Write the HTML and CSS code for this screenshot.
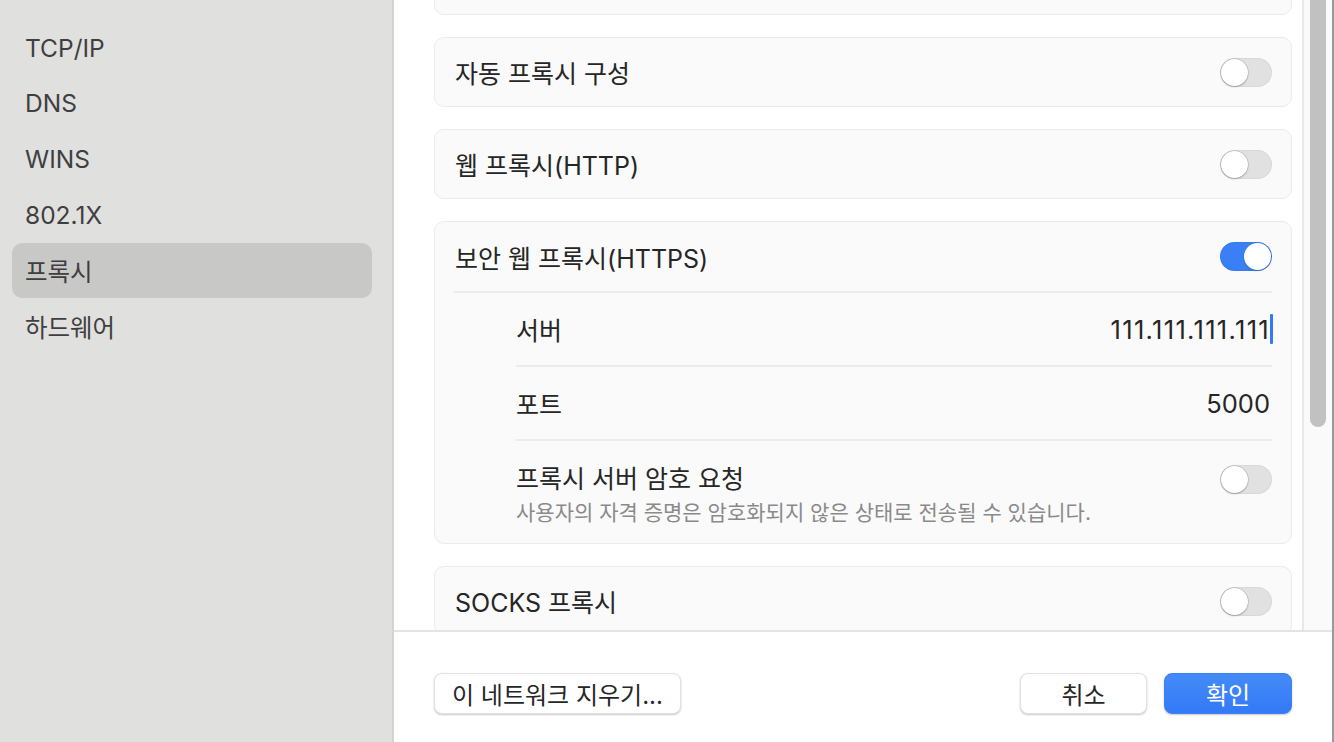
FILE: index.html
```html
<!DOCTYPE html>
<html lang="ko">
<head>
<meta charset="utf-8">
<title>프록시</title>
<link rel="stylesheet" href="styles.css">
</head>
<body>
<div class="window">
  <aside class="sidebar">
    <div class="nav-item">TCP/IP</div>
    <div class="nav-item">DNS</div>
    <div class="nav-item">WINS</div>
    <div class="nav-item">802.1X</div>
    <div class="nav-item selected">프록시</div>
    <div class="nav-item">하드웨어</div>
  </aside>
  <main class="main">
    <div class="scroll-area">
      <div class="content">
        <div class="card card-clipped"></div>
        <div class="card">
          <div class="row">
            <span class="label">자동 프록시 구성</span>
            <span class="toggle"></span>
          </div>
        </div>
        <div class="card">
          <div class="row">
            <span class="label">웹 프록시(HTTP)</span>
            <span class="toggle"></span>
          </div>
        </div>
        <div class="card">
          <div class="row header-row">
            <span class="label">보안 웹 프록시(HTTPS)</span>
            <span class="toggle on"></span>
          </div>
          <div class="sub">
            <div class="sub-row">
              <span class="label">서버</span>
              <span class="value ip">111.111.111.111<span class="caret"></span></span>
            </div>
            <div class="sub-row">
              <span class="label">포트</span>
              <span class="value">5000</span>
            </div>
            <div class="sub-row last">
              <div class="text-stack">
                <span class="label">프록시 서버 암호 요청</span>
                <span class="hint">사용자의 자격 증명은 암호화되지 않은 상태로 전송될 수 있습니다.</span>
              </div>
              <span class="toggle"></span>
            </div>
          </div>
        </div>
        <div class="card">
          <div class="row">
            <span class="label">SOCKS 프록시</span>
            <span class="toggle"></span>
          </div>
        </div>
      </div>
      <div class="scrollbar"><div class="thumb"></div></div>
    </div>
    <footer class="footer">
      <button class="btn">이 네트워크 지우기...</button>
      <div class="actions">
        <button class="btn btn-cancel">취소</button>
        <button class="btn btn-primary">확인</button>
      </div>
    </footer>
  </main>
</div>
</body>
</html>
```

FILE: styles.css
```css
* { box-sizing: border-box; }
html, body {
  margin: 0;
  padding: 0;
  width: 1334px;
  height: 742px;
  overflow: hidden;
}
body {
  font-family: "Inter", "Noto Sans CJK KR", sans-serif;
  color: #262626;
  background: #ffffff;
}
.window {
  display: flex;
  width: 1334px;
  height: 742px;
  border-right: 2px solid #9a9a9a;
}
.sidebar {
  width: 394px;
  flex: none;
  background: #e0e0df;
  border-right: 2px solid #d3d3d2;
  padding: 20px 20px 0 12px;
  display: flex;
  flex-direction: column;
  gap: 0.8px;
}
.nav-item {
  height: 55px;
  display: flex;
  align-items: center;
  padding-left: 13px;
  font-size: 24.5px;
  color: #3f3f3f;
  border-radius: 10px;
}
.nav-item.selected {
  background: #c8c8c6;
}
.main {
  flex: 1;
  display: flex;
  flex-direction: column;
  min-width: 0;
}
.scroll-area {
  height: 632px;
  flex: none;
  display: flex;
  overflow: hidden;
  border-bottom: 2px solid #e4e4e4;
}
.content {
  flex: 1;
  padding: 0 10px 0 40px;
  display: flex;
  flex-direction: column;
  gap: 22px;
}
.card {
  background: #fafafa;
  border: 1px solid #ebebeb;
  border-radius: 10px;
  flex: none;
}
.card-clipped {
  height: 60px;
  margin-top: -45px;
}
.row {
  height: 68px;
  display: flex;
  align-items: center;
  justify-content: space-between;
  padding: 0 19px 0 20px;
}
.header-row {
  height: 71px;
  margin: 0 19px 0 19px;
  padding: 0 0 0 1px;
  border-bottom: 2px solid #ececec;
}
.label {
  font-size: 25px;
  color: #262626;
  white-space: nowrap;
}
.sub {
  padding: 0 19px 0 81px;
}
.sub-row {
  height: 74px;
  display: flex;
  align-items: center;
  justify-content: space-between;
  border-bottom: 2px solid #ececec;
}
.sub-row.last {
  border-bottom: none;
  height: 102px;
  align-items: flex-start;
  padding-top: 18px;
}
.text-stack {
  display: flex;
  flex-direction: column;
  gap: 1px;
}
.hint {
  font-size: 21px;
  color: #8a8a8a;
  white-space: nowrap;
}
.value {
  font-size: 25.5px;
  color: #262626;
  display: flex;
  align-items: center;
  padding-right: 2px;
}
.value.ip {
  letter-spacing: 1.3px;
}
.caret {
  display: inline-block;
  width: 3px;
  height: 30px;
  background: #3478f6;
  margin-left: 0;
  margin-right: -3px;
  border-radius: 1px;
}
.toggle {
  position: relative;
  width: 52px;
  height: 29px;
  border-radius: 15px;
  background: #e1e1e1;
  box-shadow: inset 0 0 0 1px rgba(0,0,0,0.04);
  flex: none;
}
.toggle::after {
  content: "";
  position: absolute;
  top: 1px;
  left: 1px;
  width: 27px;
  height: 27px;
  border-radius: 50%;
  background: #ffffff;
  box-shadow: 0 0 0 0.5px rgba(0,0,0,0.18), 0 1px 2px rgba(0,0,0,0.22);
}
.toggle.on {
  background: #3a7ff5;
}
.toggle.on::after {
  left: 24px;
  box-shadow: 0 0 0 0.5px rgba(0,0,0,0.06), 0 1px 2px rgba(0,0,0,0.15);
}
.sub-row.last .toggle { margin-top: 6px; }
.scrollbar {
  width: 30px;
  flex: none;
  background: #fafafa;
  border-left: 2px solid #e8e8e8;
  padding: 0 6px 0 6px;
}
.thumb {
  width: 16px;
  height: 427px;
  background: #c1c1c1;
  border-radius: 0 0 8px 8px;
}
.footer {
  flex: 1;
  display: flex;
  align-items: center;
  justify-content: space-between;
  padding: 13px 40px 0 40px;
}
.actions {
  display: flex;
  gap: 17px;
}
.btn {
  font-family: "Inter", "Noto Sans CJK KR", sans-serif;
  font-size: 24px;
  color: #262626;
  background: #ffffff;
  border: 1px solid #e2e2e2;
  border-radius: 8px;
  height: 41px;
  padding: 0 17px;
  box-shadow: 0 1px 2px rgba(0,0,0,0.22);
  display: flex;
  align-items: center;
  justify-content: center;
}
.btn-cancel { width: 127px; }
.btn-primary {
  width: 128px;
  color: #ffffff;
  background: linear-gradient(#448bf8, #3479f6);
  border-color: #3a80f6;
}
```
